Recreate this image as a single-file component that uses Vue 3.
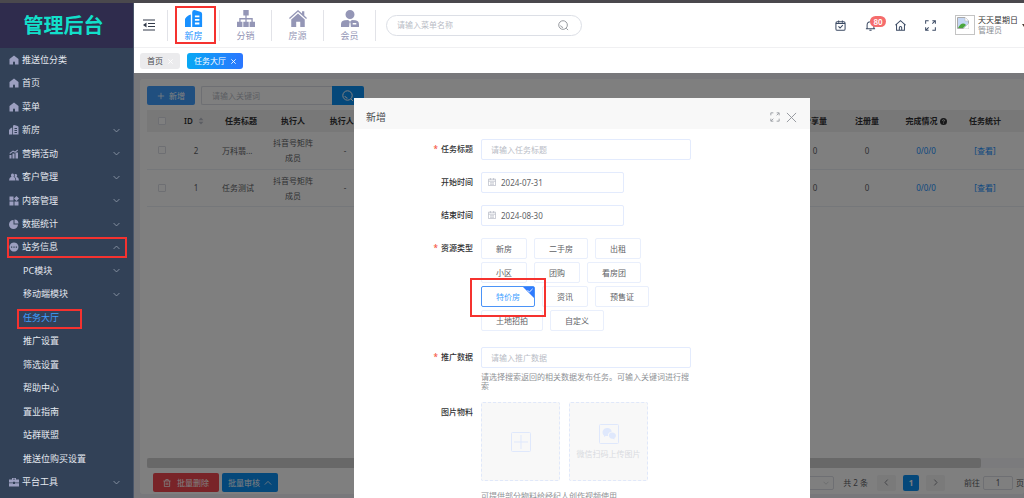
<script setup>
import { ref } from 'vue'

const menu = [
  { text: '推送位分类', icon: 'home' },
  { text: '首页', icon: 'home' },
  { text: '菜单', icon: 'home' },
  { text: '新房', icon: 'building', arrow: 'down' },
  { text: '营销活动', icon: 'chart', arrow: 'down' },
  { text: '客户管理', icon: 'users', arrow: 'down' },
  { text: '内容管理', icon: 'blocks', arrow: 'down' },
  { text: '数据统计', icon: 'pie', arrow: 'down' },
  { text: '站务信息', icon: 'dots', arrow: 'up', marked: true },
  { text: 'PC模块', sub: true, arrow: 'down' },
  { text: '移动端模块', sub: true, arrow: 'down' },
  { text: '任务大厅', sub: true, active: true, marked: true },
  { text: '推广设置', sub: true },
  { text: '筛选设置', sub: true },
  { text: '帮助中心', sub: true },
  { text: '置业指南', sub: true },
  { text: '站群联盟', sub: true },
  { text: '推送位购买设置', sub: true },
  { text: '平台工具', icon: 'case', arrow: 'down' },
]

const modules = [
  { text: '新房', icon: 'building', active: true },
  { text: '分销', icon: 'tree' },
  { text: '房源', icon: 'house' },
  { text: '会员', icon: 'member' },
]

const icons = {
  home: 'M10 1 L19 8 V19 H1 V8Z M8 19 H12 V15 A2 2 0 0 0 8 15Z',
  building: 'M0 10.5 C0 8.5 5 5 6.5 5 V19 H0Z M8 2.5 Q8 0 10.5 0 L17 2 Q19 2.5 19 4.5 V19 H8Z M11 6 V8 H16 V6Z M11 10 V12 H16 V10Z M11 14 V16 H16 V14Z',
  chart: 'M1 12 H5 V19 H1Z M7 9 H11 V19 H7Z M13 7 H18 V19 H13Z M1 8 L8 3 L12 5 L17 1 L18 3 L12 7.5 L8 5.5 L2 10Z',
  users: 'M7 3 A3.5 3.5 0 0 1 9 9 Q13 11 13 17 H0 Q0 11 5 9 A3.5 3.5 0 0 1 7 3Z M13 4 A3 3 0 0 1 15 9.5 Q20 11 20 17 H14.5 Q14.5 12 11 9 Q12 6 11 4.5Z',
  blocks: 'M1 1 H9 V9 H1Z M1 11 H9 V19 H1Z M11 11 H19 V19 H11Z M15 0 L20 5 L15 10 L10 5Z',
  pie: 'M9 2 V11 H18 A9 9 0 1 1 9 2Z M11 1 A8.5 8.5 0 0 1 19 9 H11Z',
  dots: 'M10 1 A9 9 0 1 1 9.9 1Z M4 9 V11.5 H6.5 V9Z M8.8 9 V11.5 H11.3 V9Z M13.5 9 V11.5 H16 V9Z',
  case: 'M6 5 V2 H14 V5 H20 V11 H12 V9.500 H8 V11 H0 V5Z M8 5 H12 V3.500 H8Z M0 12.500 H8 V14 H12 V12.500 H20 V19 H0Z',
  tree: 'M7 0 H13 V6 H10.700 V9 H17.500 V13 H20 V19 H14 V13 H16 V10.500 H10.700 V13 H13 V19 H7 V13 H9.300 V10.500 H4 V13 H6 V19 H0 V13 H2.500 V9 H9.300 V6 H7Z',
  house: 'M10 0 L14.500 4 V1.500 H17 V6.200 L20 9 L19 10 L10 2 L1 10 L0 9Z M10 4 L17.500 10.500 V19 H12.500 V13 H8 V19 H2.500 V10.500Z',
  member: 'M10 0 A5 5 0 0 1 10 10 A5 5 0 0 1 10 0Z M0 19 V16 Q0 12 4 11.500 L8 11 L10 13 L12 11 L16 11.500 Q20 12 20 16 V19 H11 L10.500 14 H9.500 L9 19Z M13 14.500 V16 H17 V14.500Z',
}

const rows = [
  { id: 2, title: '万科翡...' },
  { id: 1, title: '任务测试' },
]

const types = ['新房', '二手房', '出租', '小区', '团购', '看房团', '特价房', '资讯', '预售证', '土地招拍', '自定义']
const type = ref('特价房')
const start = ref('2024-07-31')
const end = ref('2024-08-30')
const page = ref('1')
</script>

<template>
  <div class="page">
    <aside class="side">
      <h1 class="brand">管理后台</h1>
      <nav class="menu">
        <component
          :is="m.arrow ? 'button' : 'a'"
          v-for="m in menu"
          :key="m.text"
          :href="m.arrow ? undefined : '#'"
          class="item"
          :class="{ sub: m.sub, active: m.active }"
        >
          <svg v-if="m.icon" class="item-icon" viewBox="0 0 20 20"><path :d="icons[m.icon]" fill-rule="evenodd" /></svg>
          <span>{{ m.text }}</span>
          <svg v-if="m.arrow" class="arrow" :class="m.arrow" viewBox="0 0 12 12"><path d="M1 3.500 L6 8.500 L11 3.500" /></svg>
          <i v-if="m.marked" class="mark" />
        </component>
      </nav>
    </aside>

    <div class="main">
      <header class="top">
        <button class="fold" aria-label="收起菜单">
          <svg viewBox="0 0 12 12"><path d="M0 1 H12 M5 4.500 H12 M5 7.500 H12 M0 11 H12" stroke="#333b4a" /><path d="M0 6 L3.500 3.500 V8.500Z" fill="#333b4a" /></svg>
        </button>
        <nav class="modules">
          <a v-for="m in modules" :key="m.text" href="#" class="module" :class="{ active: m.active }">
            <svg viewBox="0 0 20 20"><path :d="icons[m.icon]" fill-rule="evenodd" /></svg>
            <span>{{ m.text }}</span>
            <i v-if="m.active" class="mark" />
          </a>
        </nav>
        <div class="find">
          <input type="text" placeholder="请输入菜单名称" aria-label="菜单名称">
          <svg viewBox="0 0 12 12"><circle cx="5.500" cy="5.500" r="4.700" /><path d="M9 9 L11 11 M2.800 6 Q3.500 8 5.500 8.200" /></svg>
        </div>
        <div class="tools">
          <button aria-label="任务"><svg viewBox="0 0 12 12"><rect x="1" y="2" width="10" height="9.300" rx="1.500" /><path d="M1 3.800 H11 M4 0.500 V3 M8 0.500 V3 M3.800 7 L5.500 8.700 L8.500 5.500" /></svg></button>
          <button class="bell" aria-label="消息">
            <svg viewBox="0 0 12 12"><path d="M1 9.500 H11 M2.300 9.500 V5.500 A3.700 3.700 0 0 1 9.700 5.500 V9.500 M6 0.500 V2 M4.800 11.300 H7.200" /></svg>
            <span class="badge">80</span>
          </button>
          <button aria-label="主页"><svg viewBox="0 0 12 12"><path d="M0.500 5.500 L6 0.800 L11.500 5.500 M1.700 5 V11.300 H10.300 V5 M4.700 11 V8.500 A1.300 1.300 0 0 1 7.300 8.500 V11" /></svg></button>
          <button aria-label="全屏"><svg viewBox="0 0 12 12"><path d="M0.700 4 V0.700 H4 M8 0.700 H11.300 V4 M11.300 8 V11.300 H8 M4 11.300 H0.700 V8 M8 4 L11 1 M4 8 L1 11" /></svg></button>
          <div class="avatar">
            <svg viewBox="0 0 12 12"><path d="M0.500 0.500 H8 L11.500 4 V11.500 H0.500Z" fill="#c5d7f5" stroke="#aaa" /><path d="M1 11 Q5 4 9 8 L6 11Z" fill="#4ba63c" /><path d="M8 0.500 V4 H11.500 M6 12 L12 6 V12Z" fill="#fff" stroke="#bbb" stroke-width=".6" /></svg>
          </div>
          <div class="user"><b>天天星期日</b><span>管理员</span></div>
          <i class="caret" />
        </div>
      </header>

      <nav class="tabs">
        <a href="#" class="tab">首页<svg viewBox="0 0 8 8"><path d="M1.500 1.500 L6.500 6.500 M6.500 1.500 L1.500 6.500" /></svg></a>
        <a href="#" class="tab on">任务大厅<svg viewBox="0 0 8 8"><path d="M1.500 1.500 L6.500 6.500 M6.500 1.500 L1.500 6.500" /></svg></a>
      </nav>

      <div class="body">
        <section class="card">
          <div class="bar">
            <button class="btn add"><svg viewBox="0 0 10 10"><path d="M5 1 V9 M1 5 H9" /></svg>新增</button>
            <div class="query">
              <input type="text" placeholder="请输入关键词" aria-label="关键词">
              <button aria-label="搜索"><svg viewBox="0 0 12 12"><circle cx="5.500" cy="5.500" r="4.700" /><path d="M9 9 L11 11 M2.800 6 Q3.500 8 5.500 8.200" /></svg></button>
            </div>
          </div>
          <table>
            <colgroup>
              <col class="c-check"><col class="c-id"><col class="c-cell"><col class="c-cell"><col class="c-cell"><col>
              <col class="c-cell"><col class="c-cell"><col class="c-wide"><col class="c-cell"><col class="c-end">
            </colgroup>
            <thead>
              <tr>
                <th><input type="checkbox" aria-label="全选"></th>
                <th class="id">ID<svg class="sort" viewBox="0 0 6 10"><path d="M0 4 L3 0.500 L6 4Z M0 6 L3 9.500 L6 6Z" /></svg></th>
                <th>任务标题</th><th>执行人</th><th>执行人...</th><th />
                <th>分享量</th><th>注册量</th>
                <th>完成情况 <svg class="help" viewBox="0 0 10 10"><circle cx="5" cy="5" r="5" fill="#303133" /><path d="M3.500 4 Q3.500 2.500 5 2.500 Q6.500 2.500 6.500 3.800 Q6.500 4.500 5 5.500 V6.200 M5 7 V8" stroke="#fff" fill="none" /></svg></th>
                <th>任务统计</th><th />
              </tr>
            </thead>
            <tbody>
              <tr v-for="r in rows" :key="r.id">
                <td><input type="checkbox" :aria-label="r.title"></td>
                <td>{{ r.id }}</td><td class="name">{{ r.title }}</td><td class="who">抖音号矩阵成员</td><td>-</td><td />
                <td>0</td><td>0</td><td><a href="#">0/0/0</a></td><td><a href="#">[查看]</a></td><td />
              </tr>
            </tbody>
          </table>
          <div class="foot">
            <div class="scroll"><i /></div>
            <div class="actions">
              <button class="btn del"><svg viewBox="0 0 10 10"><path d="M0.500 2.500 H9.500 M3.500 2.500 V0.700 H6.500 V2.500 M1.700 2.500 V9.500 H8.300 V2.500 M4 4.500 V7.500 M6 4.500 V7.500" /></svg>批量删除</button>
              <button class="btn audit">批量审核<svg viewBox="0 0 10 10"><path d="M1 7 L5 3 L9 7" /></svg></button>
              <div class="pager">
                <div class="size">
                  <select aria-label="每页条数"><option>10条/页</option></select>
                  <svg viewBox="0 0 12 12"><path d="M1 3.500 L6 8.500 L11 3.500" /></svg>
                </div>
                <span class="total">共 2 条</span>
                <button class="step" aria-label="上一页"><svg viewBox="0 0 12 12"><path d="M8 1 L3.500 6 L8 11" /></svg></button>
                <button class="cur">1</button>
                <button class="step" aria-label="下一页"><svg viewBox="0 0 12 12"><path d="M4 1 L8.500 6 L4 11" /></svg></button>
                <label class="jump">前往<input v-model="page" type="text">页</label>
              </div>
            </div>
          </div>
        </section>

        <div class="mask">
          <div class="dialog" role="dialog" aria-labelledby="dlg-title">
            <div class="dlg-head">
              <h2 id="dlg-title">新增</h2>
              <button aria-label="最大化"><svg viewBox="0 0 12 12"><path d="M1 4 V1 H4 M8 1 H11 V4 M11 8 V11 H8 M4 11 H1 V8 M8 4 L10.500 1.500 M4 8 L1.500 10.500" /></svg></button>
              <button aria-label="关闭"><svg viewBox="0 0 12 12"><path d="M1 1 L11 11 M11 1 L1 11" /></svg></button>
            </div>
            <form class="form" @submit.prevent>
              <label class="lab req" for="f-title">任务标题</label>
              <input id="f-title" class="field" type="text" placeholder="请输入任务标题">

              <label class="lab" for="f-start">开始时间</label>
              <div class="date">
                <svg viewBox="0 0 10 10"><path d="M0.500 1.500 H9.500 V9.500 H0.500Z M0.500 4 H9.500 M3 0 V2.500 M7 0 V2.500 M2.500 6 H7.500 M2.500 7.800 H7.500" /></svg>
                <input id="f-start" v-model="start" class="field" type="text">
              </div>

              <label class="lab" for="f-end">结束时间</label>
              <div class="date">
                <svg viewBox="0 0 10 10"><path d="M0.500 1.500 H9.500 V9.500 H0.500Z M0.500 4 H9.500 M3 0 V2.500 M7 0 V2.500 M2.500 6 H7.500 M2.500 7.800 H7.500" /></svg>
                <input id="f-end" v-model="end" class="field" type="text">
              </div>

              <span id="f-type" class="lab req">资源类型</span>
              <div class="tags" role="radiogroup" aria-labelledby="f-type">
                <label v-for="t in types" :key="t" class="tag" :class="{ on: t === type }">
                  <input v-model="type" type="radio" name="type" :value="t">{{ t }}
                  <svg v-if="t === type" class="tick" viewBox="0 0 12 12"><path d="M0 0 H12 V12Z" fill="#2f7bff" /><path d="M5 3.500 L7 5.500 L10.500 2" stroke="#fff" fill="none" /></svg>
                  <i v-if="t === type" class="mark" />
                </label>
              </div>

              <label class="lab req" for="f-data">推广数据</label>
              <div>
                <input id="f-data" class="field" type="text" placeholder="请输入推广数据">
                <p class="hint">请选择搜索返回的相关数据发布任务。可输入关键词进行搜索</p>
              </div>

              <label class="lab" for="f-pic">图片物料</label>
              <div>
                <div class="uploads">
                  <label class="upload" for="f-pic">
                    <input id="f-pic" type="file">
                    <svg viewBox="0 0 20 20"><rect x=".5" y=".5" width="19" height="19" rx="1" /><path d="M10 3 V17 M3 10 H17" /></svg>
                  </label>
                  <button type="button" class="upload">
                    <svg viewBox="0 0 20 20"><rect x=".5" y=".5" width="19" height="19" rx="1" /><path class="fill" d="M8 4 C11 4 13 6 12.500 8 C10 8 8.500 10 9 12 L6.500 12 L5 13 L5 11.500 C2 9 4 4 8 4Z M13 8.500 C17.500 8.500 18 13 15.500 14 L15.500 15.500 L13.800 14.700 C9 15 8.500 8.500 13 8.500Z" /></svg>
                    <span>微信扫码上传图片</span>
                  </button>
                </div>
                <p class="hint below">可提供部分物料给经纪人创作视频使用</p>
              </div>
            </form>
          </div>
        </div>
      </div>
    </div>
  </div>
</template>

<style>
html, body { overflow: hidden; background: #fff; }
</style>

<style scoped>
.page {
  display: flex;
  height: 100vh;
  box-sizing: border-box;
  border-top: 3px solid #4a484d;
  overflow: hidden;
  font: 8px/12px "Noto Sans", "Noto Sans CJK SC", sans-serif;
  color: #606266;
}
.page *, .page *::before { box-sizing: border-box; }
button, input, select { font: inherit; color: inherit; margin: 0; padding: 0; border: 0; background: none; outline: 0; }
a { color: inherit; text-decoration: none; }
svg { display: block; flex: none; fill: none; }
h1, h2, p { margin: 0; }
::placeholder { color: #b9bdc6; opacity: 1; }
.mark { position: absolute; border: 2px solid #f5322f; pointer-events: none; z-index: 3; }

.side { display: flex; flex-direction: column; flex: none; width: 134px; background: #324157; border-right: 1px solid #4a566a; }
.brand { height: 45px; padding-right: 6px; background: #2f2c4d; color: #12dfca; font-size: 20px; line-height: 45px; font-weight: 700; text-align: center; }
.menu { display: flex; flex-direction: column; flex: 1; padding-bottom: 4px; }
.item { position: relative; display: flex; align-items: center; flex: 1; gap: 3px; padding: 0 13px 0 9px; color: #e4e8ef; font-size: 9px; text-align: left; }
.item.sub { padding-left: 23px; }
.item.active { color: #409eff; }
.item-icon { width: 10px; height: 10px; fill: #9c9fc0; }
.arrow { width: 7px; height: 7px; margin-left: auto; stroke: #8f99a9; stroke-width: 1.5; }
.arrow.up { transform: rotate(180deg); }
.item .mark { inset: 1px 6px 1px 7px; }
.item.active .mark { inset: 3px 51px 1px 17px; }

.main { display: flex; flex-direction: column; flex: 1; min-width: 0; }
.top { display: flex; align-items: center; height: 45px; flex: none; background: #fff; border-bottom: 1px solid #f0f0f2; }
.fold { width: 12px; margin: 0 12px 0 9px; }
.fold svg { width: 12px; height: 12px; }
.modules { display: flex; border-left: 1px solid #e2e3e8; }
.module { position: relative; display: flex; flex-direction: column; align-items: center; gap: 2px; width: 52px; height: 31px; border-right: 1px solid #e2e3e8; color: #9496b6; font-size: 9px; }
.module svg { width: 18px; height: 18px; fill: #9496b6; }
.module.active { color: #1890ff; }
.module.active svg { fill: #1890ff; }
.module .mark { inset: -4px 3px -3px 7px; }
.find { display: flex; align-items: center; flex: 0 1 196px; height: 21px; margin-left: 10px; padding: 0 12px 0 10px; border: 1px solid #dcdfe6; border-radius: 11px; }
.find input { flex: 1; min-width: 0; }
.find svg { width: 11px; height: 11px; stroke: #8d9096; }
.tools { display: flex; align-items: center; gap: 19px; margin-left: auto; }
.tools button { position: relative; width: 11px; }
.tools button svg { width: 11px; height: 11px; stroke: #3b4a63; stroke-width: 1.1; }
.badge { position: absolute; left: 5px; top: -4px; width: 16px; height: 11px; border-radius: 6px; background: #f56c6c; color: #fff; line-height: 11px; font-weight: 600; text-align: center; }
.avatar { width: 20px; height: 20px; border: 1px solid #c4c4c4; padding: 1px; }
.avatar svg { width: 12px; height: 12px; }
.user { display: flex; flex-direction: column; margin-left: -16px; line-height: 10px; color: #8b8e94; }
.user b { color: #333; font-weight: 400; }
.caret { width: 2px; margin-left: -15px; border-top: 3px solid #4a3a30; border-left: 2px solid transparent; }

.tabs { display: flex; align-items: center; gap: 7px; height: 25px; flex: none; padding: 1px 6px 0; background: #fff; }
.tab { display: flex; align-items: center; gap: 4px; height: 16px; padding: 0 6px 0 7px; border-radius: 3px; background: #ebebed; color: #4a4c50; }
.tab svg { width: 7px; height: 7px; stroke: #fff; }
.tab.on { background: linear-gradient(90deg, #08a8f4, #2b76ff); color: #fff; }

.body { position: relative; display: flex; flex: 1; min-height: 0; padding: 6px 0 4px 6px; background: #f0f0f6; }
.card { display: flex; flex-direction: column; flex: 1; min-width: 0; padding: 7px 0 2px 7px; background: #fff; border-radius: 3px; }
.bar { display: flex; gap: 6px; margin-bottom: 5px; }
.btn { display: flex; align-items: center; justify-content: center; gap: 6px; height: 19px; border-radius: 2px; color: #fff; }
.btn svg { width: 8px; height: 8px; stroke: #fff; }
.add { width: 48px; gap: 4px; background: #409eff; }
.query { display: flex; width: 163px; height: 19px; }
.query input { flex: 1; min-width: 0; padding: 0 10px; border: 1px solid #dcdfe6; border-right: 0; border-radius: 2px 0 0 2px; }
.query button { display: flex; align-items: center; justify-content: center; width: 32px; background: #0b90f5; border-radius: 0 2px 2px 0; }
.query svg { width: 12px; height: 12px; stroke: #fff; }
table { width: 100%; table-layout: fixed; border-collapse: collapse; text-align: center; }
.c-check { width: 30px; }
.c-id { width: 38px; }
.c-cell { width: 52px; }
.c-wide { width: 66px; }
.c-end { width: 13px; }
th, td { padding: 0; vertical-align: middle; white-space: nowrap; }
th { height: 22px; background: #f0f0f1; color: #303133; font-weight: 600; }
td { height: 37px; border-bottom: 1px solid #ebeef5; line-height: 15px; }
.id { padding-right: 4px; }
.who { padding: 0 6px; white-space: normal; }
.name { padding-left: 7px; text-align: left; }
td a { color: #1890ff; }
input[type="checkbox"] { appearance: none; display: block; width: 8px; height: 8px; margin: 0 auto; border: 1px solid #dcdfe6; border-radius: 1px; background: #fff; }
.sort, .help { display: inline-block; vertical-align: -1px; }
.sort { width: 6px; height: 8px; margin-left: 5px; fill: #b8bcc6; }
.help { width: 7px; height: 7px; }
.foot { margin-top: auto; }
.scroll { padding-right: 43px; background: #f6f6fa; }
.scroll i { display: block; height: 10px; border-radius: 2px; background: #d0d0d0; }
.actions { display: flex; gap: 3px; padding: 5px 0 0 6px; }
.del { width: 66px; background: #f24951; }
.audit { width: 56px; gap: 4px; background: #0b90f5; }
.pager { display: flex; align-items: center; margin-left: auto; }
.size { position: relative; }
.size select { appearance: none; width: 60px; height: 14px; padding-left: 6px; border: 1px solid #dcdfe6; border-radius: 2px; }
.size svg { position: absolute; right: 5px; top: 4px; width: 6px; height: 6px; stroke: #b5b8be; }
.total { margin: 0 9px; }
.step { display: flex; align-items: center; justify-content: center; width: 19px; height: 16px; background: #f4f4f5; border-radius: 2px; }
.step svg { width: 7px; height: 7px; stroke: #7b7e84; stroke-width: 1.5; }
.cur { width: 16px; height: 16px; margin: 0 7px; border-radius: 2px; background: #0b90f5; color: #fff; font-weight: 700; }
.jump { display: flex; align-items: center; gap: 3px; margin-left: 19px; }
.jump input { width: 30px; height: 14px; border: 1px solid #dcdfe6; border-radius: 2px; text-align: center; }

.mask { position: absolute; inset: 0; display: flex; justify-content: center; padding: 25px 0 0 6px; background: rgba(0, 0, 0, .5); z-index: 1; overflow: hidden; }
.dialog { width: 456px; max-width: 100%; background: #fff; }
.dlg-head { display: flex; align-items: center; gap: 6px; height: 31px; padding: 7px 13px 0 12px; background: #f8f8f8; }
.dlg-head h2 { margin-right: auto; font-size: 10px; font-weight: 400; color: #4c4e52; }
.dlg-head svg { width: 10px; height: 10px; stroke: #8f9399; }
.dlg-head button:last-child svg { width: 11px; height: 11px; }
.form { display: grid; grid-template-columns: 119px 210px; column-gap: 8px; row-gap: 12px; padding-top: 10px; }
.lab { height: 21px; line-height: 20px; color: #303133; font-weight: 500; text-align: right; }
.req::before { content: "*"; margin-right: 3px; color: #f5503c; }
.field { display: block; width: 100%; height: 21px; padding: 0 9px; border: 1px solid #e3ebfd; border-radius: 2px; background: #fff; }
.date { position: relative; width: 143px; }
.date .field { padding-left: 19px; }
.date svg { position: absolute; left: 7px; top: 6px; width: 8px; height: 8px; stroke: #b9bdc6; }
.tags { display: flex; flex-wrap: wrap; gap: 3px 7px; padding-bottom: 4px; }
.tag { position: relative; height: 21px; padding: 0 14px; border: 1px solid #e9effc; border-radius: 2px; line-height: 20px; }
.tag.on { border-color: #4b93f7; color: #409eff; }
.tag input, .upload input { position: absolute; width: 1px; height: 1px; opacity: 0; }
.tick { position: absolute; right: 0; top: 0; width: 11px; height: 11px; }
.tag .mark { inset: -9px -12px -11px -12px; }
.hint { margin-top: 4px; line-height: 9px; color: #8f9296; }
.uploads { display: flex; gap: 9px; }
.upload { display: flex; flex-direction: column; align-items: center; justify-content: center; gap: 4px; width: 79px; height: 79px; border: 1px dashed #e0e8fa; border-radius: 2px; background: #f8f8f8; color: #d9dbe0; }
.upload svg { width: 20px; height: 20px; stroke: #dfe8fc; }
.upload .fill { fill: #dfe8fc; stroke: none; }
.below { margin-top: 10px; }
</style>
